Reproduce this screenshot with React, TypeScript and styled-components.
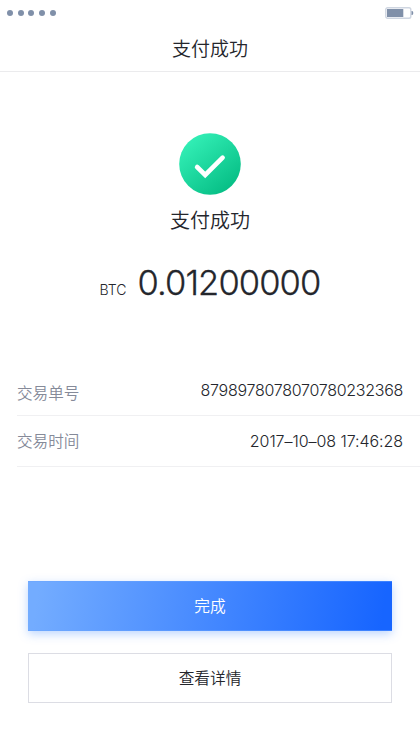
import React from "react";
import styled, { createGlobalStyle } from "styled-components";

const GlobalStyle = createGlobalStyle`
  * { box-sizing: border-box; }
  body {
    margin: 0;
    background: #fff;
    color: #24262c;
    font-family: Inter, "Noto Sans CJK SC", sans-serif;
  }
`;

const Screen = styled.main`
  width: 420px;
  height: 747px;
  display: flex;
  flex-direction: column;
  overflow: hidden;
  background: #fff;
`;

const StatusBar = styled.div`
  height: 26px;
  padding: 0 6px 0 7px;
  display: flex;
  align-items: center;
  justify-content: space-between;
`;

const Signal = styled.div`
  display: flex;
  gap: 4.7px;
`;

const Dot = styled.span`
  width: 6px;
  height: 6px;
  border-radius: 50%;
  background: #8090a9;
`;

const Header = styled.header`
  height: 46px;
  padding-top: 2px;
  display: flex;
  align-items: center;
  justify-content: center;
  border-bottom: 1px solid #ebebed;
`;

const Title = styled.h1`
  margin: 0;
  font-size: 19px;
  line-height: 28px;
  font-weight: 350;
`;

const Result = styled.section`
  height: 292px;
  padding-top: 61px;
  display: flex;
  flex-direction: column;
  align-items: center;
`;

const ResultText = styled.div`
  margin-top: 11px;
  font-size: 20px;
  line-height: 30px;
  font-weight: 350;
`;

const Amount = styled.div`
  margin-top: 25px;
  display: flex;
  align-items: baseline;
  gap: 11px;
  line-height: 44px;
`;

const Currency = styled.span`
  font-size: 14px;
  font-weight: 300;
`;

const Value = styled.span`
  font-size: 34.5px;
  font-weight: 300;
  letter-spacing: -0.9px;
  -webkit-text-stroke: 0.3px currentColor;
`;

const Details = styled.dl`
  margin: 0;
  padding-left: 17px;
`;

const Row = styled.div<{ $height: number }>`
  height: ${({ $height }) => $height}px;
  padding-right: 17px;
  display: flex;
  align-items: center;
  justify-content: space-between;
  border-bottom: 1px solid #f0f0f2;
`;

const Label = styled.dt<{ $drop: number }>`
  padding-top: ${({ $drop }) => $drop}px;
  color: #858a99;
  font-size: 15.6px;
  line-height: 24px;
  font-weight: 350;
`;

const Data = styled.dd<{ $tracking: number }>`
  margin: 0;
  font-size: 16px;
  line-height: 24px;
  font-weight: 340;
  letter-spacing: ${({ $tracking }) => $tracking}px;
`;

const Actions = styled.div`
  margin-top: 114px;
  padding: 0 28px;
  display: flex;
  flex-direction: column;
  gap: 22px;
`;

const Button = styled.button<{ $primary?: boolean }>`
  height: 50px;
  padding: 2px 0 0;
  border: 1px solid ${({ $primary }) => ($primary ? "rgba(105, 165, 255, 0.45)" : "#dcdde4")};
  border-width: ${({ $primary }) => ($primary ? "1px 0" : "1px")};
  background: ${({ $primary }) =>
    $primary ? "linear-gradient(98deg, #73acff 3%, #1765ff 97%) border-box" : "#fff"};
  box-shadow: ${({ $primary }) => ($primary ? "0 3px 9px rgba(70, 140, 255, 0.36)" : "none")};
  color: ${({ $primary }) => ($primary ? "#fff" : "#24262c")};
  font-family: inherit;
  font-size: 15.7px;
  font-weight: 350;
  line-height: 24px;
`;

const BatteryIcon = () => (
  <svg width="29" height="12" viewBox="0 0 29 12" aria-hidden="true">
    <rect x="0.8" y="0.8" width="25" height="10.4" rx="1.8" fill="#fff" stroke="#cfd6e1" strokeWidth="1.4" />
    <rect x="2" y="2" width="16.3" height="8" fill="#8090a9" />
    <path d="M26.5 4h.5a1.3 2 0 0 1 0 4h-.5z" fill="#8090a9" />
  </svg>
);

const SuccessIcon = () => (
  <svg width="62" height="62" viewBox="0 0 62 62" aria-hidden="true">
    <defs>
      <linearGradient id="success" x1="0.15" y1="0.1" x2="0.82" y2="0.92">
        <stop offset="0" stopColor="#33efb6" />
        <stop offset="1" stopColor="#06be85" />
      </linearGradient>
    </defs>
    <circle cx="31" cy="31" r="30.8" fill="url(#success)" />
    <path d="M18.1 34l8.1 8L43.6 24.6" fill="none" stroke="#fff" strokeWidth="4.6" strokeLinecap="round" />
  </svg>
);

export default function App() {
  return (
    <>
      <GlobalStyle />
      <Screen>
        <StatusBar>
          <Signal>
            {[0, 1, 2, 3, 4].map((n) => (
              <Dot key={n} />
            ))}
          </Signal>
          <BatteryIcon />
        </StatusBar>
        <Header>
          <Title>支付成功</Title>
        </Header>
        <Result>
          <SuccessIcon />
          <ResultText>支付成功</ResultText>
          <Amount>
            <Currency>BTC</Currency>
            <Value>0.01200000</Value>
          </Amount>
        </Result>
        <Details>
          <Row $height={52}>
            <Label $drop={8}>交易单号</Label>
            <Data $tracking={-0.28}>8798978078070780232368</Data>
          </Row>
          <Row $height={51}>
            <Label $drop={2}>交易时间</Label>
            <Data $tracking={-0.06}>2017–10–08 17:46:28</Data>
          </Row>
        </Details>
        <Actions>
          <Button $primary>完成</Button>
          <Button>查看详情</Button>
        </Actions>
      </Screen>
    </>
  );
}
